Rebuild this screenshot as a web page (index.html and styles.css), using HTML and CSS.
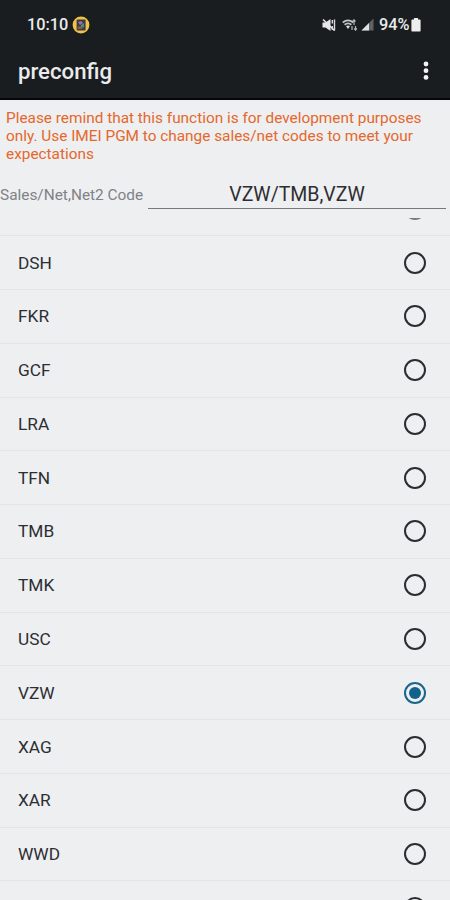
FILE: index.html
```
<!DOCTYPE html>
<html lang="en">
<head>
<meta charset="utf-8">
<title>preconfig</title>
<link rel="stylesheet" href="styles.css">
</head>
<body>
<header class="top">
  <div class="status">
    <span class="clock">10:10</span>
    <svg class="app-icon" width="18" height="18" viewBox="0 0 18 18"><circle cx="9" cy="9" r="8.4" fill="#efc443"/><rect x="4.600" y="3.600" width="9" height="11" rx="1" fill="#3c3a4a"/><path d="M6 6l3-1 2 2-3 2z" fill="#9a6fa0"/><path d="M9 9l3-2v4l-3 1z" fill="#4b8f8b"/><path d="M5.500 11l3-1 2 3h-5z" fill="#8b5a4e"/></svg>
    <div class="indicators">
      <svg width="14" height="14" viewBox="0 0 14 14"><path d="M.5 4.500h3L8.500 1v12L3.500 9.500h-3z" fill="#e6e8e9"/><path d="M1 1.500l11.500 11" stroke="#e6e8e9" stroke-width="1.600"/><path d="M10.300 2v3.500M12.500 1.500v11M10.300 8v4" stroke="#d9dcdd" stroke-width="1.400" fill="none"/></svg>
      <svg class="wifi" width="16" height="14" viewBox="0 0 16 14"><path d="M.8 4.500Q6 .2 11.200 4.500M2.600 6.800Q6 4 9.400 6.800" stroke="#c3c6c8" stroke-width="1.800" fill="none"/><path d="M4 8.300Q6 6.600 8 8.300L6 11z" fill="#d6d8d9"/><path d="M12 7V2M10.500 3.500L12 1.800l1.500 1.700M10 8v4M13.500 8v4M12.200 10.500l1.300 1.600 1.300-1.600" stroke="#b5b8ba" stroke-width="1.200" fill="none"/></svg>
      <svg class="signal" width="13" height="13" viewBox="0 0 13 13"><path d="M12.500.5v12H.5z" fill="#5e6265"/><path d="M8 5v7.500H.5z" fill="#dfe1e2"/></svg>
      <span class="percent">94%</span>
      <svg class="battery" width="10" height="14" viewBox="0 0 10 14"><path d="M3 0h4v1.600h1.600Q9.600 1.600 9.600 2.600v9.800q0 1.200-1.200 1.200H1.600Q.4 13.600.4 12.400V2.600q0-1 1-1H3z" fill="#eceeee"/></svg>
    </div>
  </div>
  <div class="bar">
    <h1>preconfig</h1>
    <svg width="6" height="20" viewBox="0 0 6 20" fill="#f3f4f4"><circle cx="3" cy="3" r="2.400"/><circle cx="3" cy="9.700" r="2.400"/><circle cx="3" cy="16.400" r="2.400"/></svg>
  </div>
</header>
<p class="warning">Please remind that this function is for development purposes<br>only. Use IMEI PGM to change sales/net codes to meet your<br>expectations</p>
<div class="field">
  <span class="field-label">Sales/Net,Net2 Code</span>
  <div class="field-value"><span>VZW/TMB,VZW</span></div>
</div>
<ul class="list">
  <li><span></span><i class="radio"></i></li>
  <li><span>DSH</span><i class="radio"></i></li>
  <li><span>FKR</span><i class="radio"></i></li>
  <li><span>GCF</span><i class="radio"></i></li>
  <li><span>LRA</span><i class="radio"></i></li>
  <li><span>TFN</span><i class="radio"></i></li>
  <li><span>TMB</span><i class="radio"></i></li>
  <li><span>TMK</span><i class="radio"></i></li>
  <li><span>USC</span><i class="radio"></i></li>
  <li><span>VZW</span><i class="radio on"></i></li>
  <li><span>XAG</span><i class="radio"></i></li>
  <li><span>XAR</span><i class="radio"></i></li>
  <li><span>WWD</span><i class="radio"></i></li>
  <li><span></span><i class="radio"></i></li>
</ul>
</body>
</html>
```
FILE: styles.css
```
* { box-sizing: border-box; }
body {
  margin: 0;
  height: 900px;
  overflow: hidden;
  display: flex;
  flex-direction: column;
  background: #eeeff1;
  font-family: Roboto, "Liberation Sans", sans-serif;
  color: #2c2e31;
}
.top {
  flex: none;
  height: 100px;
  background: #1a1d20;
  border-bottom: 2px solid #060708;
  color: #e9ebec;
}
.status {
  display: flex;
  align-items: center;
  height: 49px;
  padding: 0 29px 0 27px;
}
.clock { width: 41px; font-size: 16.3px; font-weight: 500; white-space: nowrap; }
.app-icon { margin-left: 4px; }
.indicators { display: flex; align-items: center; margin-left: auto; }
.wifi { margin-left: 6px; }
.signal { margin-left: 3px; }
.percent { width: 32px; margin-left: 5px; font-size: 16.3px; font-weight: 500; white-space: nowrap; }
.bar {
  display: flex;
  align-items: center;
  justify-content: space-between;
  height: 44px;
  padding: 0 21px 0 18px;
}
h1 { margin: 0; font-size: 22.2px; font-weight: 500; }
.warning {
  flex: none;
  height: 72px;
  margin: 0;
  padding: 9px 0 0 6px;
  font-size: 15.37px;
  line-height: 18px;
  white-space: nowrap;
  color: #e5672b;
}
.field {
  flex: none;
  display: flex;
  height: 45.5px;
}
.field-label {
  width: 148px;
  padding-top: 14px;
  font-size: 15.4px;
  line-height: 18px;
  color: #7f8286;
  white-space: nowrap;
}
.field-value {
  width: 298px;
  height: 37px;
  padding-top: 12px;
  border-bottom: 1.5px solid #77797c;
  text-align: center;
  font-size: 19.5px;
  line-height: 22px;
}
.list {
  flex: 1;
  min-height: 0;
  margin: 0;
  padding: 0;
  overflow: hidden;
  list-style: none;
}
.list li {
  display: flex;
  align-items: center;
  justify-content: space-between;
  height: 53.77px;
  padding: 0 24px 0 18px;
  border-bottom: 1px solid #e4e5e7;
  font-size: 17.3px;
}
.list li:first-child { margin-top: -35px; }
.list li:first-child .radio { border-color: #77797c; }
.radio {
  display: flex;
  width: 22px;
  height: 22px;
  border: 2px solid #2b2d30;
  border-radius: 50%;
}
.radio.on { border-color: #18668b; }
.radio.on::before {
  content: "";
  width: 12px;
  height: 12px;
  margin: auto;
  border-radius: 50%;
  background: #12628a;
}
```
